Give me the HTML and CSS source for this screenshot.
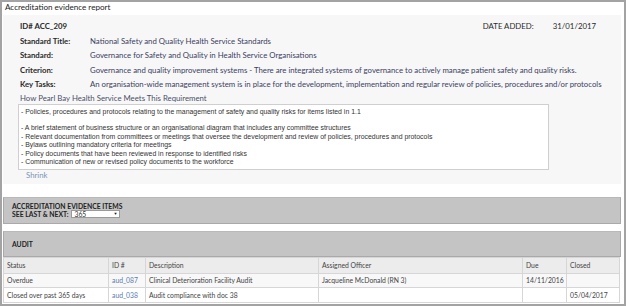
FILE: index.html
```html
<!DOCTYPE html>
<html>
<head>
<meta charset="utf-8">
<link rel="stylesheet" href="styles.css">
</head>
<body>
<div class="window">
  <div class="title">Accreditation evidence report</div>
  <div class="body">
    <section class="details">
      <div class="id-row">
        <span class="id">ID# ACC_209</span>
        <span class="date"><span class="date-label">DATE ADDED:</span><span class="date-value">31/01/2017</span></span>
      </div>
      <div class="fields">
        <div class="label">Standard Title:</div><div class="value">National Safety and Quality Health Service Standards</div>
        <div class="label">Standard:</div><div class="value">Governance for Safety and Quality in Health Service Organisations</div>
        <div class="label">Criterion:</div><div class="value">Governance and quality improvement systems - There are integrated systems of governance to actively manage patient safety and quality risks.</div>
        <div class="label">Key Tasks:</div><div class="value">An organisation-wide management system is in place for the development, implementation and regular review of policies, procedures and/or protocols</div>
      </div>
      <div class="req-label">How Pearl Bay Health Service Meets This Requirement</div>
      <div class="req-box">
        <div>- Policies, procedures and protocols relating to the management of safety and quality risks for items listed in 1.1</div>
        <div>&nbsp;</div>
        <div>- A brief statement of business structure or an organisational diagram that includes any committee structures</div>
        <div>- Relevant documentation from committees or meetings that oversee the development and review of policies, procedures and protocols</div>
        <div>- Bylaws outlining mandatory criteria for meetings</div>
        <div>- Policy documents that have been reviewed in response to identified risks</div>
        <div>- Communication of new or revised policy documents to the workforce</div>
      </div>
      <a class="shrink">Shrink</a>
    </section>

    <section class="bar items-bar">
      <div class="bar-title">ACCREDITATION EVIDENCE ITEMS</div>
      <div class="see-row">
        <span>SEE LAST &amp; NEXT:</span>
        <span class="select"><span>365</span><span class="arrow">&#9660;</span></span>
      </div>
    </section>

    <section class="audit">
      <div class="bar audit-bar"><div class="bar-title">AUDIT</div></div>
      <table class="grid">
        <colgroup>
          <col class="c-status"><col class="c-id"><col class="c-desc"><col class="c-officer"><col class="c-due"><col class="c-closed">
        </colgroup>
        <thead>
          <tr><th>Status</th><th>ID #</th><th>Description</th><th>Assigned Officer</th><th>Due</th><th>Closed</th></tr>
        </thead>
        <tbody>
          <tr class="odd"><td>Overdue</td><td><a class="link">aud_087</a></td><td>Clinical Deterioration Facility Audit</td><td>Jacqueline McDonald (RN 3)</td><td>14/11/2016</td><td></td></tr>
          <tr><td>Closed over past 365 days</td><td><a class="link">aud_038</a></td><td>Audit compliance with doc 38</td><td></td><td></td><td>05/04/2017</td></tr>
        </tbody>
      </table>
    </section>
  </div>
</div>
</body>
</html>
```

FILE: styles.css
```css
* { box-sizing: border-box; }
html, body { margin: 0; padding: 0; background: #fff; }
body { font-family: Lato, "Open Sans", sans-serif; color: #333; }

.window {
  width: 626px;
  height: 306px;
  border: 2px solid #a3a3a3;
  overflow: hidden;
  background: #fff;
}

.title {
  height: 13px;
  line-height: 11px;
  padding-left: 3px;
  font-size: 8.1px;
  color: #1c1c1c;
}

.body {
  padding: 0 3px 0 1px;
}

.details {
  background: #f7f7f7;
  padding: 4px 0 5px 15px;
  height: 169px;
}

.id-row {
  display: flex;
  justify-content: space-between;
  height: 14.5px;
  line-height: 14.5px;
  padding-left: 2px;
  padding-right: 25px;
  font-size: 7.8px;
}
.id { font-weight: 700; color: #2a2a2a; }
.date { display: flex; color: #2a2a2a; }
.date-label { width: 70px; }

.fields {
  display: grid;
  grid-template-columns: 70px 1fr;
  grid-auto-rows: 14.5px;
  align-items: center;
  padding-left: 2px;
  font-size: 7.8px;
}
.label { font-weight: 700; color: #2a2a2a; }
.value { color: #3a405f; white-space: nowrap; }

.req-label {
  height: 12px;
  line-height: 12px;
  padding-left: 2px;
  font-size: 7.8px;
  color: #4a5068;
}

.req-box {
  width: 531px;
  height: 66px;
  background: #fff;
  border: 1px solid #cfcfcf;
  padding: 3px 2px;
  font-family: "Liberation Sans", Arial, sans-serif;
  font-size: 6.9px;
  line-height: 8.4px;
  color: #333;
  white-space: nowrap;
}

.shrink {
  display: block;
  margin-left: 8px;
  height: 10px;
  line-height: 10px;
  font-size: 7.8px;
  color: #7d93b8;
}

.bar {
  background: #c4c4c4;
  border: 1px solid #a9a9a9;
  border-top-color: #b9b9b9;
  color: #222;
  font-size: 6.8px;
}
.bar-title { font-weight: 700; }

.items-bar {
  margin-top: 12.7px;
  height: 27.3px;
  padding: 4px 8px 0;
  line-height: 8.3px;
}
.see-row {
  display: flex;
  align-items: center;
  gap: 3px;
  font-weight: 700;
}
.select {
  display: flex;
  justify-content: space-between;
  align-items: center;
  width: 49px;
  height: 8px;
  background: #fff;
  border: 1px solid #9a9a9a;
  padding: 0 2px;
  font-weight: 400;
  color: #333;
  line-height: 6px;
}
.arrow { font-size: 4px; color: #111; }

.audit { margin-top: 6.7px; }
.audit-bar {
  height: 26.6px;
  padding-left: 8px;
  display: flex;
  align-items: center;
}

.grid {
  width: 616px;
  border-collapse: collapse;
  table-layout: fixed;
  font-size: 6.8px;
  color: #444;
}
.c-status { width: 105px; }
.c-id { width: 37px; }
.c-desc { width: 173px; }
.c-officer { width: 204px; }
.c-due { width: 44px; }
.c-closed { width: 53px; }

.grid th, .grid td {
  border: 1px solid #d6d6d6;
  padding: 0 3px;
  text-align: left;
  font-weight: 400;
  white-space: nowrap;
  overflow: hidden;
}
.grid th { height: 15.4px; background: #ececec; color: #444; }
.grid td { height: 14.5px; background: #fff; }
.grid tr.odd td { background: #f8f8f8; }
.link { color: #5b7bb0; }
```
